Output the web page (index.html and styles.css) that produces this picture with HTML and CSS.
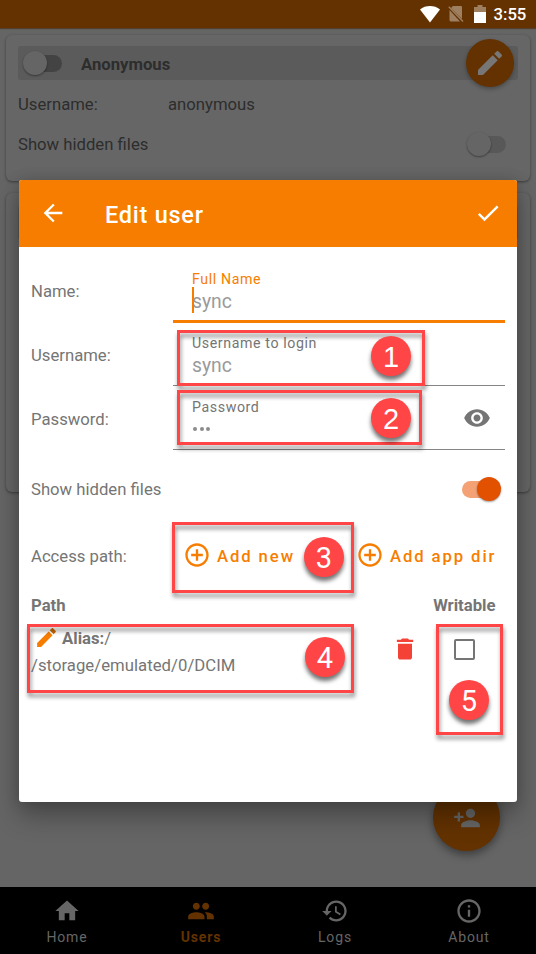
FILE: index.html
```html
<!DOCTYPE html>
<html lang="en">
<head>
<meta charset="utf-8">
<title>Edit user</title>
<link rel="stylesheet" href="styles.css">
</head>
<body>
<div class="screen">
  <header class="status">
    <svg class="wifi" viewBox="0 0 20 17"><path d="M0 3.500C5.500-1.100 14.500-1.100 20 3.500L10 16.500Z"/></svg>
    <svg class="nosim" viewBox="0 0 16 18"><path d="M5 1h8q1 0 1 1v12L3 3zM1.500 5L12 16.500H3q-1.500 0-1.500-1.500z"/><path d="M.3 2.200L1.300 1.200 15.500 16 14.500 17z"/></svg>
    <svg class="battery" viewBox="0 0 12 18"><path class="dim" d="M0 2h3.500V0h5v2H12v5H0z"/><path d="M0 7h12v11H0z"/></svg>
    <span class="clock">3:55</span>
  </header>
  <main class="page">
    <section class="card first">
      <div class="strip"><span class="switch off"></span><b>Anonymous</b>
        <span class="fab edit-fab"><svg viewBox="0 0 24 24"><path d="M3 17.250V21h3.750L17.810 9.940l-3.750-3.750L3 17.250zM20.710 7.040c.39-.39.39-1.020 0-1.410l-2.340-2.340c-.39-.39-1.020-.39-1.410 0l-1.830 1.830 3.750 3.750 1.830-1.830z"/></svg></span>
      </div>
      <div class="info"><span>Username:</span><span>anonymous</span></div>
      <div class="info hidden-row"><span>Show hidden files</span><span class="switch off pale"></span></div>
    </section>
    <section class="card second"><div class="strip"></div></section>
    <span class="fab add-fab"><svg viewBox="0 0 24 24"><path d="M15 12c2.210 0 4-1.790 4-4s-1.790-4-4-4-4 1.790-4 4 1.790 4 4 4zm-9-2V7H4v3H1v2h3v3h2v-3h3v-2H6zm9 4c-2.670 0-8 1.340-8 4v2h16v-2c0-2.660-5.330-4-8-4z"/></svg></span>
  </main>
  <nav class="tabs">
    <div class="tab"><svg viewBox="0 0 24 24"><path d="M10 20v-6h4v6h5v-8h3L12 3 2 12h3v8z"/></svg><span>Home</span></div>
    <div class="tab active"><svg viewBox="0 0 24 24"><path d="M16 11c1.660 0 2.990-1.340 2.990-3S17.660 5 16 5s-3 1.340-3 3 1.340 3 3 3zm-8 0c1.660 0 2.990-1.340 2.990-3S9.660 5 8 5 5 6.340 5 8s1.340 3 3 3zm0 2c-2.330 0-7 1.170-7 3.500V19h14v-2.500C15 14.170 10.330 13 8 13zm8 0c-.29 0-.62.02-.97.05 1.160.84 1.970 1.970 1.970 3.450V19h6v-2.500c0-2.330-4.670-3.500-7-3.500z"/></svg><span>Users</span></div>
    <div class="tab"><svg viewBox="0 0 24 24"><path d="M13 3c-4.970 0-9 4.030-9 9H1l3.890 3.890.07.14L9 12H6c0-3.870 3.130-7 7-7s7 3.130 7 7-3.130 7-7 7c-1.930 0-3.680-.79-4.940-2.060l-1.420 1.420C8.270 19.990 10.510 21 13 21c4.970 0 9-4.030 9-9s-4.030-9-9-9zm-1 5v5l4.280 2.540.72-1.210-3.500-2.080V8H12z"/></svg><span>Logs</span></div>
    <div class="tab"><svg viewBox="0 0 24 24"><path d="M11 17h2v-6h-2v6zm1-15C6.480 2 2 6.480 2 12s4.480 10 10 10 10-4.480 10-10S17.520 2 12 2zm0 18c-4.410 0-8-3.590-8-8s3.590-8 8-8 8 3.590 8 8-3.590 8-8 8zM11 9h2V7h-2v2z"/></svg><span>About</span></div>
  </nav>

  <div class="dialog">
    <header class="bar">
      <svg class="back" viewBox="0 0 24 24"><path d="M20 11H7.830l5.590-5.590L12 4l-8 8 8 8 1.410-1.410L7.830 13H20v-2z"/></svg>
      <h1>Edit user</h1>
      <svg class="done" viewBox="0 0 24 24"><path d="M9 16.170L4.830 12l-1.420 1.410L9 19 21 7l-1.410-1.410z"/></svg>
    </header>
    <div class="form">
      <div class="row"><label>Name:</label><div class="field focus"><span class="hint">Full Name</span><span class="value">sync</span><i class="caret"></i></div></div>
      <div class="row"><label>Username:</label><div class="field"><span class="hint">Username to login</span><span class="value">sync</span></div></div>
      <div class="row"><label>Password:</label><div class="field"><span class="hint">Password</span><span class="value dots"><i></i><i></i><i></i></span>
        <svg class="eye" viewBox="0 0 24 24"><path d="M12 4.500C7 4.500 2.730 7.610 1 12c1.730 4.390 6 7.500 11 7.500s9.270-3.110 11-7.500c-1.730-4.390-6-7.500-11-7.500zM12 17c-2.760 0-5-2.240-5-5s2.240-5 5-5 5 2.240 5 5-2.240 5-5 5zm0-8c-1.660 0-3 1.340-3 3s1.340 3 3 3 3-1.340 3-3-1.340-3-3-3z"/></svg></div></div>
      <div class="row toggle"><label>Show hidden files</label><span class="switch on"></span></div>
      <div class="row access"><label>Access path:</label>
        <span class="add"><svg viewBox="0 0 24 24"><path d="M13 7h-2v4H7v2h4v4h2v-4h4v-2h-4V7zm-1-5C6.480 2 2 6.480 2 12s4.480 10 10 10 10-4.480 10-10S17.520 2 12 2zm0 18c-4.410 0-8-3.590-8-8s3.590-8 8-8 8 3.590 8 8-3.590 8-8 8z"/></svg><span>Add new</span></span>
        <span class="add app"><svg viewBox="0 0 24 24"><path d="M13 7h-2v4H7v2h4v4h2v-4h4v-2h-4V7zm-1-5C6.480 2 2 6.480 2 12s4.480 10 10 10 10-4.480 10-10S17.520 2 12 2zm0 18c-4.410 0-8-3.590-8-8s3.590-8 8-8 8 3.590 8 8-3.590 8-8 8z"/></svg><span>Add app dir</span></span>
      </div>
      <div class="heads"><b>Path</b><b>Writable</b></div>
      <div class="entry">
        <div class="path">
          <div class="alias"><svg viewBox="0 0 24 24"><path d="M3 17.250V21h3.750L17.810 9.940l-3.750-3.750L3 17.250z"/><path class="tip" d="M20.710 7.040c.39-.39.39-1.020 0-1.410l-2.340-2.340c-.39-.39-1.020-.39-1.410 0l-1.830 1.830 3.750 3.750 1.830-1.830z"/></svg><b>Alias:</b>/</div>
          <div class="dir">/storage/emulated/0/DCIM</div>
        </div>
        <svg class="trash" viewBox="0 0 24 24"><path d="M6 19c0 1.100.9 2 2 2h8c1.100 0 2-.9 2-2V7.500H6V19zM19 4h-3.500l-1-1h-5l-1 1H5v2h14V4z"/></svg>
        <span class="check"></span>
      </div>
    </div>
  </div>

  <div class="mark m1"></div><div class="num n1">1</div>
  <div class="mark m2"></div><div class="num n2">2</div>
  <div class="mark m3"></div><div class="num n3">3</div>
  <div class="mark m4"></div><div class="num n4">4</div>
  <div class="mark m5"></div><div class="num n5">5</div>
</div>
</body>
</html>
```
FILE: styles.css
```css
* { box-sizing: border-box; }
body { margin: 0; font-family: Roboto, "Liberation Sans", sans-serif; font-size: 16.7px; }
svg { display: block; fill: currentColor; flex: none; }
.screen { position: relative; width: 536px; height: 954px; overflow: hidden; background: #656565; display: flex; flex-direction: column; }

.status { height: 28px; flex: none; background: #633200; color: #fff; display: flex; align-items: flex-start; padding: 5px 10px 0 420px; box-shadow: 0 1px 1px rgba(70, 40, 10, .6); }
.wifi { width: 20px; height: 17px; margin-top: 1px; }
.nosim { width: 16px; height: 18px; margin-left: 8px; opacity: .38; }
.battery { width: 12px; height: 18px; margin-left: 10px; }
.dim { opacity: .38; }
.clock { margin-left: 7.500px; font-size: 16.700px; font-weight: 500; line-height: 20px; }

.page { flex: 1; padding: 7px 6px 0; color: #2d2d2d; position: relative; }
.card { border-radius: 6px; background: #666; box-shadow: 0 1px 3px rgba(0, 0, 0, .42); padding: 11px 12px; }
.first { height: 146px; }
.second { height: 299px; margin-top: 12px; padding-top: 13px; }
.strip { height: 34px; background: #5b5b5b; border-radius: 3px; display: flex; align-items: center; padding-left: 4px; position: relative; }
.strip b { margin-left: 19px; line-height: 20px; padding-top: 3px; }
.fab { position: absolute; border-radius: 50%; background: #633200; color: #777; display: grid; place-items: center; }
.edit-fab { width: 48px; height: 48px; right: 4px; top: -7px; box-shadow: 0 2px 4px rgba(0, 0, 0, .3); }
.edit-fab svg { width: 32px; height: 32px; }
.add-fab { width: 67px; height: 67px; left: 433px; top: 756px; color: #666; box-shadow: 0 4px 8px rgba(0, 0, 0, .4); }
.add-fab svg { width: 28px; height: 28px; }
.info { display: grid; grid-template-columns: 150px 1fr; line-height: 20px; margin-top: 15px; }
.hidden-row { display: flex; justify-content: space-between; margin-top: 20px; padding-right: 11px; }

.switch { position: relative; width: 40px; height: 24px; flex: none; }
.switch::before { content: ""; position: absolute; left: 3px; top: 4px; width: 37px; height: 17px; border-radius: 9px; background: #434343; }
.switch::after { content: ""; position: absolute; left: 1px; top: 0; width: 24px; height: 24px; border-radius: 50%; background: #656565; box-shadow: 0 1px 2px rgba(0, 0, 0, .4); }
.pale { margin: -3px 1px 0 0; }
.pale::before { background: #585858; }
.on::before { left: 0; background: #f4a175; }
.on::after { left: 15px; background: #e25100; }

.tabs { height: 67px; background: #000; color: #666; display: grid; grid-template-columns: repeat(4, 1fr); }
.tab { display: flex; flex-direction: column; align-items: center; padding-top: 10px; font-size: 14px; letter-spacing: .85px; }
.tab svg { width: 28px; height: 28px; }
.tab span { line-height: 20px; margin-top: 2px; }
.active { color: #633200; font-weight: 700; }

.dialog { position: absolute; left: 19px; top: 180px; width: 498px; height: 622px; background: #fff; border-radius: 3px; color: #757575; box-shadow: 0 14px 26px rgba(0, 0, 0, .3), 0 0 14px rgba(0, 0, 0, .15); }
.bar { height: 67px; background: #f77d00; color: #fff; display: flex; align-items: center; padding: 0 15px 0 19.500px; border-radius: 3px 3px 0 0; }
.back, .done { width: 28px; height: 28px; margin-top: -1px; }
.done { margin-left: auto; }
h1 { margin: 3px 0 0 38.500px; font-size: 23.500px; font-weight: 500; letter-spacing: .75px; line-height: 30px; }
.form { padding: 12px 12px 0; }
.row { height: 64px; display: grid; grid-template-columns: 142px 1fr; }
.row label { line-height: 20px; margin-top: 23px; }
.field { position: relative; height: 64px; padding: 10px 0 0 19px; display: flex; flex-direction: column; border-bottom: 1px solid #858585; }
.row:nth-child(2) .field, .row:nth-child(3) .field { height: 63px; }
.focus { border-bottom: 3px solid #f77d00; }
.hint { font-size: 14.200px; line-height: 20px; letter-spacing: .6px; }
.focus .hint { color: #f77d00; }
.value { font-size: 19.300px; line-height: 24px; color: #9a9a9a; padding-top: 1px; }
.caret { position: absolute; left: 19px; top: 28px; width: 2px; height: 26px; background: #f77d00; }
.dots { display: flex; gap: 2.500px; padding: 9.500px 0 0 1px; }
.dots i { width: 4px; height: 4px; border-radius: 50%; background: #8c8c8c; }
.eye { position: absolute; width: 28px; height: 28px; right: 14.500px; top: 17px; }
.toggle { display: flex; justify-content: space-between; margin-top: 6px; padding-right: 3px; }
.toggle .switch { margin-top: 19.500px; }
.access { display: flex; margin-top: 3px; }
.access label { width: 152px; }
.add { display: flex; align-items: center; height: 28px; margin-top: 17px; color: #f77d00; font-weight: 500; letter-spacing: 1.900px; gap: 6px; white-space: nowrap; }
.add span { padding-top: 2px; }
.add svg { width: 28px; height: 28px; }
.app { position: absolute; left: 337px; }
.heads { display: flex; justify-content: space-between; padding-right: 9.500px; line-height: 20px; margin-top: 8px; }
.entry { display: flex; padding-top: 13px; }
.path { width: 360px; }
.alias { display: flex; line-height: 20px; }
.alias svg { width: 25px; height: 25px; margin: -4px 3px -1px 3px; color: #f77d00; }
.dir { line-height: 20px; margin-top: 7px; letter-spacing: .04px; }
.tip { fill: #d26a00; }
.trash { width: 28px; height: 28px; color: #f44336; margin-top: 6px; }
.check { width: 21px; height: 21px; border: 2px solid #757575; border-radius: 2px; margin: 10px 0 0 35px; }

.mark { position: absolute; border: 3px solid #ff4545; filter: drop-shadow(1px 4px 2px rgba(0, 0, 0, .45)); }
.m1 { left: 177px; top: 330px; width: 248px; height: 56px; }
.m2 { left: 177px; top: 390px; width: 245px; height: 55px; }
.m3 { left: 172px; top: 522px; width: 182px; height: 71px; }
.m4 { left: 27px; top: 624px; width: 327px; height: 69px; }
.m5 { left: 436px; top: 624px; width: 67px; height: 111px; }
.num { position: absolute; width: 40px; height: 40px; border-radius: 50%; background: #ff4545; color: #fff; font-size: 29px; line-height: 42px; text-align: center; box-shadow: 0 4px 4px rgba(0, 0, 0, .55); }
.n1, .n2 { font-family: "Liberation Sans", Arial, sans-serif; }
.n1 { left: 371px; top: 336px; }
.n2 { left: 371px; top: 398px; }
.n3 { left: 304px; top: 537px; }
.n4 { left: 305px; top: 637px; }
.n5 { left: 449px; top: 680px; }
```
